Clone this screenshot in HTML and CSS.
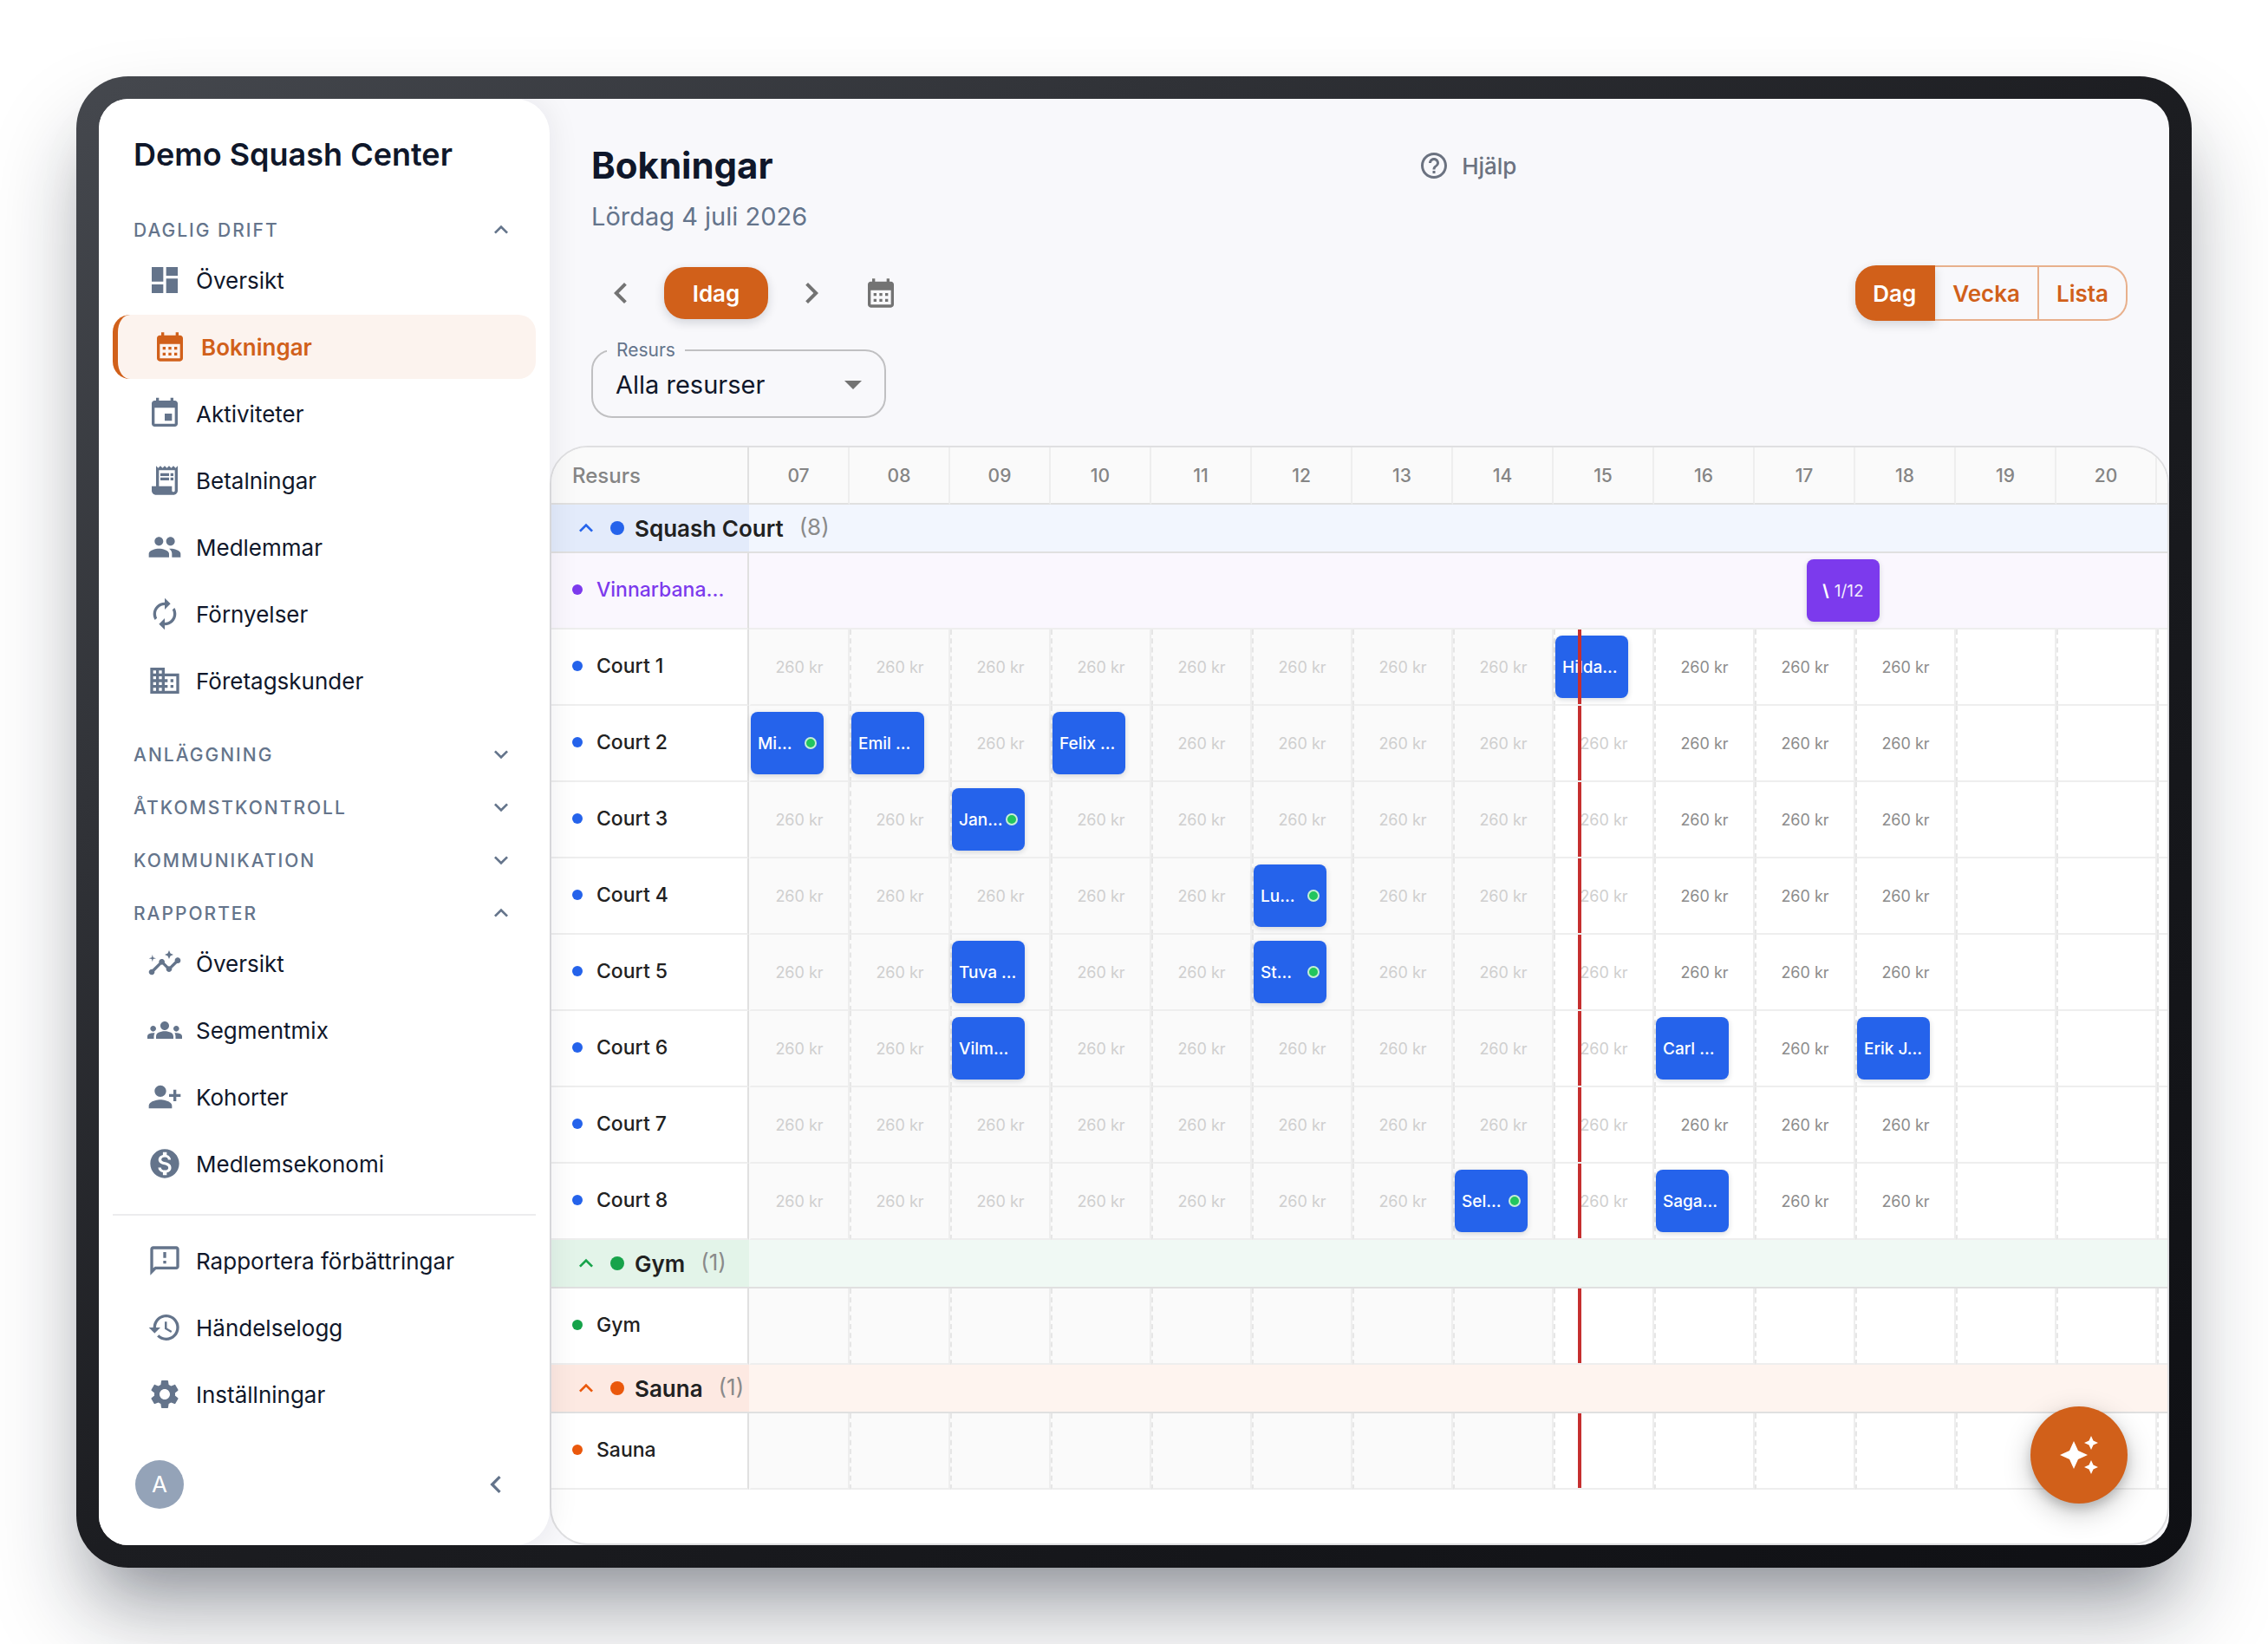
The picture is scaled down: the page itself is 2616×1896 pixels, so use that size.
FILE: index.html
```html
<!DOCTYPE html>
<html lang="sv">
<head>
  <meta charset="UTF-8">
  <meta name="viewport" content="width=device-width, initial-scale=1.0">
  <title>Bokningar - Demo Squash Center</title>
  <link rel="stylesheet" href="styles.css">
</head>
<body>
  <!-- Icons used more than once -->
  <svg class="sprite" aria-hidden="true">
    <symbol id="up" viewBox="0 0 24 24"><path d="M12 8l-6 6 1.41 1.41L12 10.83l4.59 4.58L18 14z"/></symbol>
    <symbol id="down" viewBox="0 0 24 24"><path d="M16.59 8.59 12 13.17 7.41 8.59 6 10l6 6 6-6z"/></symbol>
    <symbol id="left" viewBox="0 0 24 24"><path d="M15.41 7.41 14 6l-6 6 6 6 1.41-1.41L10.83 12z"/></symbol>
    <symbol id="right" viewBox="0 0 24 24"><path d="M10 6 8.59 7.41 13.17 12l-4.58 4.59L10 18l6-6z"/></symbol>
    <symbol id="calendar" viewBox="0 0 24 24"><path d="M19 4h-1V2h-2v2H8V2H6v2H5c-1.11 0-1.99.9-1.99 2L3 20c0 1.1.89 2 2 2h14c1.1 0 2-.9 2-2V6c0-1.1-.9-2-2-2zm0 16H5V10h14v10zM9 14H7v-2h2v2zm4 0h-2v-2h2v2zm4 0h-2v-2h2v2zm-8 4H7v-2h2v2zm4 0h-2v-2h2v2zm4 0h-2v-2h2v2z"/></symbol>
  </svg>

  <div class="device">
    <div class="screen">
      <aside class="sidebar">
        <div class="brand">Demo Squash Center</div>

        <nav class="nav">
          <section>
            <button class="nav-heading">DAGLIG DRIFT <svg class="icon-sm"><use href="#up"/></svg></button>
            <div class="nav-list">
              <a class="nav-item" href="#oversikt">
                <svg class="icon" viewBox="0 0 24 24"><path d="M3 13h8V3H3v10zm0 8h8v-6H3v6zm10 0h8V11h-8v10zm0-18v6h8V3h-8z"/></svg>
                Översikt
              </a>
              <a class="nav-item active" href="#bokningar">
                <svg class="icon"><use href="#calendar"/></svg>
                Bokningar
              </a>
              <a class="nav-item" href="#aktiviteter">
                <svg class="icon" viewBox="0 0 24 24"><path d="M17 12h-5v5h5v-5zM16 1v2H8V1H6v2H5c-1.11 0-1.99.9-1.99 2L3 19c0 1.1.89 2 2 2h14c1.1 0 2-.9 2-2V5c0-1.1-.9-2-2-2h-1V1h-2zm3 18H5V8h14v11z"/></svg>
                Aktiviteter
              </a>
              <a class="nav-item" href="#betalningar">
                <svg class="icon" viewBox="0 0 24 24"><path d="M19.5 3.5 18 2l-1.5 1.5L15 2l-1.5 1.5L12 2l-1.5 1.5L9 2 7.5 3.5 6 2v14H3v3c0 1.66 1.34 3 3 3h12c1.66 0 3-1.34 3-3V2l-1.5 1.5zM19 19c0 .55-.45 1-1 1s-1-.45-1-1v-3H8V5h11v14z"/><path d="M9 7h6v2H9zM16 7h2v2h-2zM9 10h6v2H9zM16 10h2v2h-2z"/></svg>
                Betalningar
              </a>
              <a class="nav-item" href="#medlemmar">
                <svg class="icon" viewBox="0 0 24 24"><path d="M16 11c1.66 0 2.99-1.34 2.99-3S17.66 5 16 5c-1.66 0-3 1.34-3 3s1.34 3 3 3zm-8 0c1.66 0 2.99-1.34 2.99-3S9.66 5 8 5C6.34 5 5 6.34 5 8s1.34 3 3 3zm0 2c-2.33 0-7 1.17-7 3.5V19h14v-2.5c0-2.33-4.67-3.5-7-3.5zm8 0c-.29 0-.62.02-.97.05 1.16.84 1.97 1.97 1.97 3.45V19h6v-2.5c0-2.33-4.67-3.5-7-3.5z"/></svg>
                Medlemmar
              </a>
              <a class="nav-item" href="#fornyelser">
                <svg class="icon" viewBox="0 0 24 24"><path d="M12 6v3l4-4-4-4v3c-4.42 0-8 3.58-8 8 0 1.57.46 3.03 1.24 4.26L6.7 14.8c-.45-.83-.7-1.79-.7-2.8 0-3.31 2.69-6 6-6zm6.76 1.74L17.3 9.2c.44.84.7 1.79.7 2.8 0 3.31-2.69 6-6 6v-3l-4 4 4 4v-3c4.42 0 8-3.58 8-8 0-1.57-.46-3.03-1.24-4.26z"/></svg>
                Förnyelser
              </a>
              <a class="nav-item" href="#foretagskunder">
                <svg class="icon" viewBox="0 0 24 24"><path d="M12 7V3H2v18h20V7H12zM6 19H4v-2h2v2zm0-4H4v-2h2v2zm0-4H4V9h2v2zm0-4H4V5h2v2zm4 12H8v-2h2v2zm0-4H8v-2h2v2zm0-4H8V9h2v2zm0-4H8V5h2v2zm10 12h-8v-2h2v-2h-2v-2h2v-2h-2V9h8v10zm-2-8h-2v2h2v-2zm0 4h-2v2h2v-2z"/></svg>
                Företagskunder
              </a>
            </div>
          </section>

          <button class="nav-heading">ANLÄGGNING <svg class="icon-sm"><use href="#down"/></svg></button>
          <button class="nav-heading">ÅTKOMSTKONTROLL <svg class="icon-sm"><use href="#down"/></svg></button>
          <button class="nav-heading">KOMMUNIKATION <svg class="icon-sm"><use href="#down"/></svg></button>

          <section>
            <button class="nav-heading">RAPPORTER <svg class="icon-sm"><use href="#up"/></svg></button>
            <div class="nav-list">
              <a class="nav-item" href="#rapport-oversikt">
                <svg class="icon" viewBox="0 0 24 24"><path d="M21 8c-1.45 0-2.26 1.44-1.93 2.51l-3.55 3.56c-.3-.09-.74-.09-1.04 0l-2.55-2.55C12.27 10.45 11.46 9 10 9c-1.45 0-2.27 1.44-1.93 2.52l-4.56 4.55C2.44 15.74 1 16.55 1 18c0 1.1.9 2 2 2 1.45 0 2.26-1.44 1.93-2.51l4.55-4.56c.3.09.74.09 1.04 0l2.55 2.55C12.73 16.55 13.54 18 15 18c1.45 0 2.27-1.44 1.93-2.52l3.56-3.55c1.07.33 2.51-.48 2.51-1.93 0-1.1-.9-2-2-2z"/><path d="m15 9 .94-2.07L18 6l-2.06-.93L15 3l-.92 2.07L12 6l2.08.93zM3.5 11 4 9l2-.5L4 8l-.5-2L3 8l-2 .5L3 9z"/></svg>
                Översikt
              </a>
              <a class="nav-item" href="#segmentmix">
                <svg class="icon" viewBox="0 0 24 24"><path d="M12 12.75c1.63 0 3.07.39 4.24.9 1.08.48 1.76 1.56 1.76 2.73V18H6v-1.61c0-1.18.68-2.26 1.76-2.73 1.17-.52 2.61-.91 4.24-.91zM4 13c1.1 0 2-.9 2-2s-.9-2-2-2-2 .9-2 2 .9 2 2 2zm1.13 1.1c-.37-.06-.74-.1-1.13-.1-.99 0-1.93.21-2.78.58C.48 14.9 0 15.62 0 16.43V18h4.5v-1.61c0-.83.23-1.61.63-2.29zM20 13c1.1 0 2-.9 2-2s-.9-2-2-2-2 .9-2 2 .9 2 2 2zm4 3.43c0-.81-.48-1.53-1.22-1.85-.85-.37-1.79-.58-2.78-.58-.39 0-.76.04-1.13.1.4.68.63 1.46.63 2.29V18H24v-1.57zM12 6c1.66 0 3 1.34 3 3s-1.34 3-3 3-3-1.34-3-3 1.34-3 3-3z"/></svg>
                Segmentmix
              </a>
              <a class="nav-item" href="#kohorter">
                <svg class="icon" viewBox="0 0 24 24"><path d="M13 8c0-2.21-1.79-4-4-4S5 5.79 5 8s1.79 4 4 4 4-1.79 4-4zm2 2v2h3v3h2v-3h3v-2h-3V7h-2v3h-3zM1 18v2h16v-2c0-2.66-5.33-4-8-4s-8 1.34-8 4z"/></svg>
                Kohorter
              </a>
              <a class="nav-item" href="#medlemsekonomi">
                <svg class="icon" viewBox="0 0 24 24"><path d="M12 2C6.48 2 2 6.48 2 12s4.48 10 10 10 10-4.48 10-10S17.52 2 12 2zm1.41 16.09V20h-2.67v-1.93c-1.71-.36-3.16-1.46-3.27-3.4h1.96c.1 1.05.82 1.87 2.65 1.87 1.96 0 2.4-.98 2.4-1.59 0-.83-.44-1.61-2.67-2.14-2.48-.6-4.18-1.62-4.18-3.67 0-1.72 1.39-2.84 3.11-3.21V4h2.67v1.95c1.86.45 2.79 1.86 2.85 3.39H14.3c-.05-1.11-.64-1.87-2.22-1.87-1.5 0-2.4.68-2.4 1.64 0 .84.65 1.39 2.67 1.91s4.18 1.39 4.18 3.91c-.01 1.83-1.38 2.83-3.12 3.16z"/></svg>
                Medlemsekonomi
              </a>
            </div>
          </section>
        </nav>

        <div class="nav-list nav-footer">
          <a class="nav-item" href="#feedback">
            <svg class="icon" viewBox="0 0 24 24"><path d="M20 2H4c-1.1 0-1.99.9-1.99 2L2 22l4-4h14c1.1 0 2-.9 2-2V4c0-1.1-.9-2-2-2zm0 14H5.17l-.59.59-.58.58V4h16v12zm-9-4h2v2h-2zm0-6h2v4h-2z"/></svg>
            Rapportera förbättringar
          </a>
          <a class="nav-item" href="#logg">
            <svg class="icon" viewBox="0 0 24 24"><path d="M13 3c-4.97 0-9 4.03-9 9H1l3.89 3.89.07.14L9 12H6c0-3.87 3.13-7 7-7s7 3.13 7 7-3.13 7-7 7c-1.93 0-3.68-.79-4.94-2.06l-1.42 1.42C8.27 19.99 10.51 21 13 21c4.97 0 9-4.03 9-9s-4.03-9-9-9zm-1 5v5l4.28 2.54.72-1.21-3.5-2.08V8H12z"/></svg>
            Händelselogg
          </a>
          <a class="nav-item" href="#installningar">
            <svg class="icon" viewBox="0 0 24 24"><path d="M19.14 12.94c.04-.3.06-.61.06-.94 0-.32-.02-.64-.07-.94l2.03-1.58c.18-.14.23-.41.12-.61l-1.92-3.32c-.12-.22-.37-.29-.59-.22l-2.39.96c-.5-.38-1.03-.7-1.62-.94l-.36-2.54c-.04-.24-.24-.41-.48-.41h-3.84c-.24 0-.43.17-.47.41l-.36 2.54c-.59.24-1.13.57-1.62.94l-2.39-.96c-.22-.08-.47 0-.59.22L2.74 8.87c-.12.21-.08.47.12.61l2.03 1.58c-.05.3-.09.63-.09.94s.02.64.07.94l-2.03 1.58c-.18.14-.23.41-.12.61l1.92 3.32c.12.22.37.29.59.22l2.39-.96c.5.38 1.03.7 1.62.94l.36 2.54c.05.24.24.41.48.41h3.84c.24 0 .44-.17.47-.41l.36-2.54c.59-.24 1.13-.56 1.62-.94l2.39.96c.22.08.47 0 .59-.22l1.92-3.32c.12-.22.07-.47-.12-.61l-2.01-1.58zM12 15.6c-1.98 0-3.6-1.62-3.6-3.6s1.62-3.6 3.6-3.6 3.6 1.62 3.6 3.6-1.62 3.6-3.6 3.6z"/></svg>
            Inställningar
          </a>
        </div>

        <div class="user">
          <span class="avatar">A</span>
          <button class="collapse" aria-label="Fäll ihop menyn"><svg class="icon"><use href="#left"/></svg></button>
        </div>
      </aside>

      <main class="main">
        <header class="page-header">
          <div>
            <h1>Bokningar</h1>
            <p class="date">Lördag 4 juli 2026</p>
          </div>
          <button class="help">
            <svg viewBox="0 0 24 24"><path d="M11 18h2v-2h-2v2zm1-16C6.48 2 2 6.48 2 12s4.48 10 10 10 10-4.48 10-10S17.52 2 12 2zm0 18c-4.41 0-8-3.59-8-8s3.59-8 8-8 8 3.59 8 8-3.59 8-8 8zm0-14c-2.21 0-4 1.79-4 4h2c0-1.1.9-2 2-2s2 .9 2 2c0 2-3 1.75-3 5h2c0-2.25 3-2.5 3-5 0-2.21-1.79-4-4-4z"/></svg>
            Hjälp
          </button>
        </header>

        <div class="toolbar">
          <button class="icon-button" aria-label="Föregående dag"><svg class="icon-lg"><use href="#left"/></svg></button>
          <button class="today">Idag</button>
          <button class="icon-button" aria-label="Nästa dag"><svg class="icon-lg"><use href="#right"/></svg></button>
          <button class="icon-button" aria-label="Välj datum"><svg class="icon"><use href="#calendar"/></svg></button>
          <div class="views">
            <button class="view selected">Dag</button>
            <button class="view">Vecka</button>
            <button class="view">Lista</button>
          </div>
        </div>

        <fieldset class="filter">
          <legend><label for="resource">Resurs</label></legend>
          <div class="filter-field">
            <select id="resource">
              <option>Alla resurser</option>
            </select>
            <svg class="icon-lg" viewBox="0 0 24 24"><path d="m7 10 5 5 5-5z"/></svg>
          </div>
        </fieldset>

        <div class="schedule">
          <table>
            <thead>
              <tr id="hours"><th class="corner">Resurs</th></tr>
            </thead>
            <tbody id="rows"></tbody>
          </table>
        </div>
      </main>

      <button class="assistant" aria-label="Assistent">
        <svg class="icon-lg" viewBox="0 0 24 24"><path d="M19 9l1.25-2.75L23 5l-2.75-1.25L19 1l-1.25 2.75L15 5l2.75 1.25L19 9zm-7.5.5L9 4 6.5 9.5 1 12l5.5 2.5L9 20l2.5-5.5L17 12l-5.5-2.5zM19 15l-1.25 2.75L15 19l2.75 1.25L19 23l1.25-2.75L23 19l-2.75-1.25L19 15z"/></svg>
      </button>
    </div>
  </div>

  <script src="schedule.js"></script>
</body>
</html>
```
FILE: styles.css
```css
* {
  box-sizing: border-box;
}
body {
  margin: 0;
  padding: 88px;
  min-height: 100vh;
  display: flex;
  background: #fff;
  color: #0f172a;
  font-family: Inter, "Liberation Sans", sans-serif;
  font-size: 26px;
  overflow: hidden;
}
button, select {
  font: inherit;
  color: inherit;
  border: 0;
  background: none;
  padding: 0;
  cursor: pointer;
}
svg {
  fill: currentColor;
  flex: none;
  display: block;
}
.sprite {
  position: absolute;
  width: 0;
  height: 0;
}
.icon-sm {
  width: 32px;
  height: 32px;
}
.icon {
  width: 40px;
  height: 40px;
}
.icon-lg {
  width: 48px;
  height: 48px;
}

/* Device frame */
.device {
  flex: 1;
  display: flex;
  min-width: 0;
  padding: 26px;
  border-radius: 60px;
  background: linear-gradient(145deg, #45484e, #1c1d21 50%, #0f1014);
  box-shadow: 0 60px 100px rgba(17, 24, 39, 0.26), 0 50px 70px -40px rgba(17, 24, 39, 0.34);
}
.screen {
  position: relative;
  flex: 1;
  min-width: 0;
  display: flex;
  border-radius: 34px;
  background: #f8f8fb;
  overflow: hidden;
}

/* Sidebar */
.sidebar {
  flex: none;
  width: 520px;
  display: flex;
  flex-direction: column;
  padding: 36px 16px 42px;
  background: #fff;
  border-radius: 0 40px 40px 0;
  box-shadow: 0 0 36px rgba(15, 23, 42, 0.08);
  z-index: 1;
}
.brand {
  padding: 0 24px;
  margin-bottom: 38px;
  font-size: 36px;
  font-weight: 600;
  line-height: 56px;
}
.nav {
  display: flex;
  flex-direction: column;
  gap: 19px;
  padding-bottom: 13px;
  border-bottom: 2px solid #ececee;
}
.nav-heading {
  width: 100%;
  height: 42px;
  padding: 0 24px;
  display: flex;
  align-items: center;
  justify-content: space-between;
  color: #64748b;
  font-size: 21px;
  font-weight: 500;
  letter-spacing: 2px;
}
.nav-list {
  display: flex;
  flex-direction: column;
  gap: 3px;
  padding-bottom: 8px;
}
.nav-item {
  height: 74px;
  padding: 0 40px;
  display: flex;
  align-items: center;
  gap: 16px;
  border-radius: 20px;
  color: #0f172a;
  text-decoration: none;
}
.nav-item .icon {
  color: #64748b;
}
.nav-item.active {
  border-left: 6px solid #d1601a;
  background: #fcf3ee;
  color: #d1601a;
  font-weight: 600;
}
.nav-item.active .icon {
  color: #d1601a;
}
.nav-footer {
  padding-top: 15px;
}
.user {
  margin-top: auto;
  padding: 0 26px;
  display: flex;
  align-items: center;
  justify-content: space-between;
}
.avatar {
  width: 56px;
  height: 56px;
  border-radius: 50%;
  background: #94a3b8;
  color: #fff;
  line-height: 56px;
  text-align: center;
}
.collapse {
  color: #64748b;
}

/* Main area */
.main {
  flex: 1;
  min-width: 0;
  display: flex;
  flex-direction: column;
  padding-top: 48px;
}
.page-header {
  display: grid;
  grid-template-columns: 7fr 6fr;
  align-items: start;
  padding: 0 48px;
}
h1 {
  margin: 0;
  font-size: 42px;
  font-weight: 700;
  line-height: 58px;
}
.date {
  margin: 10px 0 0;
  color: #64748b;
  font-size: 29px;
  line-height: 40px;
}
.help {
  height: 58px;
  display: flex;
  align-items: center;
  gap: 14px;
  color: #6b7280;
  font-weight: 500;
}
.help svg {
  width: 36px;
  height: 36px;
}
.toolbar {
  display: flex;
  align-items: center;
  gap: 16px;
  padding: 0 48px;
  margin-top: 34px;
}
.icon-button {
  padding: 10px;
  color: #737373;
}
.today {
  width: 120px;
  height: 60px;
  border-radius: 24px;
  background: #d1601a;
  color: #fff;
  font-weight: 600;
  box-shadow: 0 4px 12px rgba(15, 23, 42, 0.16);
}
.views {
  display: flex;
  height: 64px;
  margin-left: auto;
}
.view {
  padding: 0 20px;
  border: 2px solid #e8b08c;
  border-left-width: 0;
  color: #d1601a;
  font-weight: 600;
}
.view:last-child {
  border-radius: 0 24px 24px 0;
}
.view.selected {
  border-color: #d1601a;
  border-radius: 24px 0 0 24px;
  background: #d1601a;
  color: #fff;
  box-shadow: 0 4px 12px rgba(15, 23, 42, 0.16);
}
.filter {
  width: 340px;
  margin: 20px 48px 32px;
  padding: 0 12px 10px 16px;
  border: 2px solid #c0c0c2;
  border-radius: 24px;
}
.filter legend {
  padding: 0 11px;
  color: #64748b;
  font-size: 21px;
  line-height: 24px;
}
.filter-field {
  display: flex;
  align-items: center;
  height: 54px;
  color: #737373;
}
.filter select {
  flex: 1;
  appearance: none;
  height: 48px;
  padding-left: 10px;
  color: #0f172a;
  font-size: 29px;
}

/* Schedule */
.schedule {
  flex: 1;
  border: 2px solid #dfdfe1;
  border-radius: 44px;
  background: #fff;
  overflow: hidden;
}
table {
  width: 1968px;
  table-layout: fixed;
  border-collapse: separate;
  border-spacing: 0;
}
th, td {
  padding: 0;
  border-bottom: 2px solid #eee;
  white-space: nowrap;
}
thead th {
  height: 66px;
  border-right: 2px solid #eee;
  border-bottom-color: #e0e0e0;
  background: #fafafa;
  color: #858585;
  font-size: 21px;
  font-weight: 500;
}
thead .corner {
  width: 228px;
  padding-left: 24px;
  border-right-color: #e0e0e0;
  font-size: 24px;
  text-align: left;
}
.group th, .group td {
  height: 56px;
  border-bottom-color: #e0e0e0;
}
.group-name {
  display: flex;
  align-items: center;
  padding-left: 24px;
  color: #212121;
  font-weight: 600;
}
.group-name .dot {
  width: 16px;
  height: 16px;
  margin: 0 12px;
}
.count {
  margin-left: 18px;
  padding-bottom: 4px;
  color: #8a8a8a;
  font-weight: 400;
}
.dot {
  flex: none;
  width: 12px;
  height: 12px;
  border-radius: 50%;
  background: currentColor;
}
.blue { color: #2563eb; }
.green { color: #16a34a; }
.orange { color: #ea580c; }
.purple { color: #7c3aed; }
.group-blue th { background: #e3ebfb; }
.group-blue td { background: #f2f6fe; }
.group-green th { background: #e3f4e9; }
.group-green td { background: #f0f9f4; }
.group-orange th { background: #fde9e2; }
.group-orange td { background: #fef4ef; }

.resource th, .resource td {
  height: 88px;
}
.resource th {
  border-right: 2px solid #e0e0e0;
}
.resource-name {
  display: flex;
  align-items: center;
  gap: 16px;
  padding: 0 0 2px 24px;
  color: #212121;
  font-size: 23px;
  font-weight: 500;
}
.activity th, .activity td {
  background: #faf7fe;
}
.activity .resource-name {
  color: #7c3aed;
}
.slot {
  position: relative;
  border-left: 2px dashed #e6e6e6;
  border-right: 2px solid #eee;
  color: #8c8c8c;
  font-size: 18px;
  text-align: center;
}
th + .slot {
  border-left-color: transparent;
}
.slot.past {
  background: #fafafa;
}
.slot.past, .slot.current {
  color: #cfcfcf;
}
.booking {
  width: 84px;
  height: 72px;
  padding: 0 8px;
  display: flex;
  align-items: center;
  justify-content: space-between;
  border-radius: 8px;
  background: #2563eb;
  color: #fff;
  font-size: 19px;
  font-weight: 500;
  box-shadow: 0 2px 6px rgba(15, 23, 42, 0.16);
}
.booking.event {
  justify-content: center;
  gap: 6px;
  margin-left: 60px;
  background: #7c3aed;
}
.event b {
  font-weight: 700;
}
.event span {
  font-weight: 400;
  opacity: 0.9;
}
.checked-in {
  flex: none;
  width: 14px;
  height: 14px;
  border: 2px solid #c6efd6;
  border-radius: 50%;
  background: #22c55e;
}
.now {
  position: absolute;
  top: 0;
  bottom: 0;
  width: 4px;
  background: #c62f2f;
}

.assistant {
  position: absolute;
  right: 48px;
  bottom: 48px;
  width: 112px;
  height: 112px;
  display: flex;
  align-items: center;
  justify-content: center;
  border-radius: 50%;
  background: #d1601a;
  color: #fff;
  box-shadow: 0 10px 32px rgba(0, 0, 0, 0.22), 0 6px 12px rgba(0, 0, 0, 0.16);
  z-index: 2;
}
```
FILE: schedule.js
```js
const FIRST_HOUR = 7;
const LAST_HOUR = 21;
const LAST_PRICED_HOUR = 18;
const NOW = { hour: 15, minute: 14 };

// Bookings are keyed by start hour, [name, checked in]
const groups = [
  {
    name: 'Squash Court', color: 'blue', priced: true,
    resources: [
      { name: 'Court 1', bookings: { 15: ['Hilda…'] } },
      { name: 'Court 2', bookings: { 7: ['Mi…', true], 8: ['Emil …'], 10: ['Felix …'] } },
      { name: 'Court 3', bookings: { 9: ['Jan…', true] } },
      { name: 'Court 4', bookings: { 12: ['Lu…', true] } },
      { name: 'Court 5', bookings: { 9: ['Tuva …'], 12: ['St…', true] } },
      { name: 'Court 6', bookings: { 9: ['Vilm…'], 16: ['Carl …'], 18: ['Erik J…'] } },
      { name: 'Court 7', bookings: {} },
      { name: 'Court 8', bookings: { 14: ['Sel…', true], 16: ['Saga…'] } }
    ]
  },
  { name: 'Gym', color: 'green', resources: [{ name: 'Gym', bookings: {} }] },
  { name: 'Sauna', color: 'orange', resources: [{ name: 'Sauna', bookings: {} }] }
];

function resourceHead(name, color) {
  return `<th scope="row"><div class="resource-name"><span class="dot ${color}"></span>${name}</div></th>`;
}

function slot(resource, hour, priced) {
  const booking = resource.bookings[hour];
  let state = '';
  let content = '';
  if (hour < NOW.hour) state = 'past';
  if (hour === NOW.hour) state = 'current';

  if (booking) {
    content = `<div class="booking">${booking[0]}${booking[1] ? '<span class="checked-in"></span>' : ''}</div>`;
  } else if (priced && hour <= LAST_PRICED_HOUR) {
    content = '260 kr';
  }
  if (hour === NOW.hour) {
    content += `<span class="now" style="left: ${NOW.minute / 60 * 100}%"></span>`;
  }
  return `<td class="slot ${state}">${content}</td>`;
}

// Hour header
let head = '';
for (let h = FIRST_HOUR; h <= LAST_HOUR; h++) {
  head += `<th scope="col">${h < LAST_HOUR ? String(h).padStart(2, '0') : ''}</th>`;
}
document.getElementById('hours').insertAdjacentHTML('beforeend', head);

// Body
let body = '';
groups.forEach((group) => {
  body += `<tr class="group group-${group.color}">
    <th scope="row"><div class="group-name">
      <svg class="icon-sm ${group.color}"><use href="#up"/></svg>
      <span class="dot ${group.color}"></span>${group.name}
      <span class="count">(${group.resources.length})</span>
    </div></th>
    <td colspan="15"></td>
  </tr>`;

  // Open activity that is spread over several courts
  if (group.color === 'blue') {
    body += `<tr class="resource activity">${resourceHead('Vinnarbana…', 'purple')}
      <td colspan="10"></td>
      <td colspan="5"><div class="booking event"><b>\\</b><span>1/12</span></div></td>
    </tr>`;
  }

  group.resources.forEach((resource) => {
    body += `<tr class="resource">${resourceHead(resource.name, group.color)}`;
    for (let h = FIRST_HOUR; h <= LAST_HOUR; h++) {
      body += slot(resource, h, group.priced);
    }
    body += '</tr>';
  });
});
document.getElementById('rows').innerHTML = body;
```
